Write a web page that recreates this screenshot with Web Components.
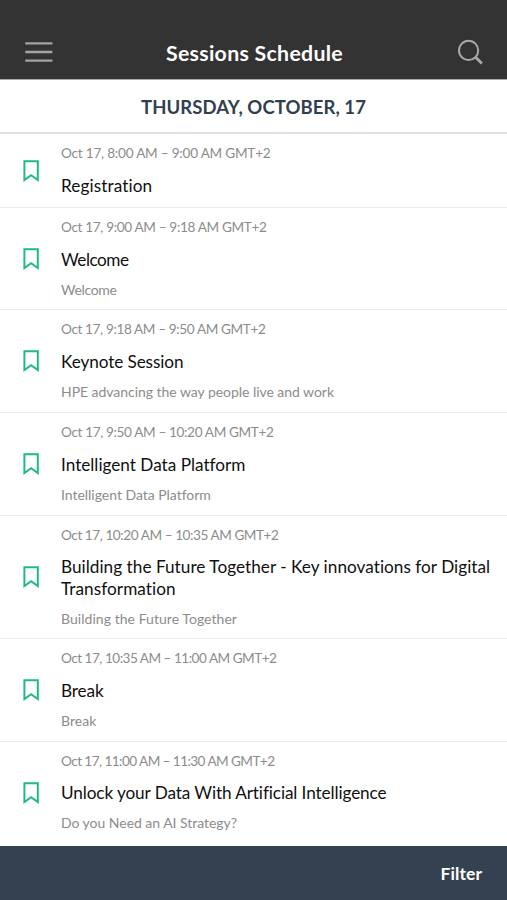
<!DOCTYPE html>
<html lang="en">
<head>
<meta charset="utf-8">
<title>Sessions Schedule</title>
<style>
body { margin: 0; background: #fff; font-family: Lato, "Open Sans", sans-serif; }
</style>
</head>
<body>
<schedule-app></schedule-app>
<script>
// One line of text whose tracking is set so that it spans a given width.
class FitText extends HTMLElement {
  connectedCallback() {
    if (this.shadowRoot) return;
    this.attachShadow({ mode: 'open' }).innerHTML =
      '<style>:host{display:block;white-space:nowrap}span{display:inline-block}</style><span><slot></slot></span>';
    const span = this.shadowRoot.querySelector('span');
    const target = Number(this.getAttribute('span'));
    const count = this.textContent.length;
    if (target) span.style.letterSpacing = (target - span.getBoundingClientRect().width) / count + 'px';
  }
}

class AppHeader extends HTMLElement {
  connectedCallback() {
    this.attachShadow({ mode: 'open' }).innerHTML = `
      <style>
        :host { display: grid; grid-template-columns: 28px 1fr 28px; align-items: center; box-sizing: border-box;
          height: 79px; padding: 24px 23px 0 25px; background: #333; color: #fff; font-size: 21.3px; font-weight: 700; line-height: 26px; }
        svg { display: block; }
        fit-text { justify-self: center; padding-top: 3px; }
      </style>
      <svg width="28" height="28" viewBox="0 0 28 28" stroke="#a3a3a3" stroke-width="2.4"><path d="M0.3 5.4H27.4M0.3 14H27.4M0.3 22.6H27.4"/></svg>
      <fit-text span="177">Sessions Schedule</fit-text>
      <svg width="28" height="28" viewBox="0 0 28 28" fill="none" stroke="#a8a8a8" stroke-width="2"><circle cx="12.6" cy="12.4" r="9.6"/><path d="M19.4 19.1L25.9 25.6" stroke-width="2.8"/></svg>`;
  }
}

class DayHeading extends HTMLElement {
  connectedCallback() {
    this.attachShadow({ mode: 'open' }).innerHTML = `
      <style>
        :host { display: flex; justify-content: center; box-sizing: border-box; height: 55px; padding-top: 15px;
          border-top: 1px solid #aaa; border-bottom: 2px solid #e0e0e0; color: #313f50; font-size: 18.5px; font-weight: 700; line-height: 24px; }
      </style>
      <slot></slot>`;
  }
}

class SessionRow extends HTMLElement {
  connectedCallback() {
    this.attachShadow({ mode: 'open' }).innerHTML = `
      <style>
        :host { display: grid; grid-template-columns: 61px 1fr; box-sizing: border-box; border-bottom: 1.5px solid #ebebeb; }
        .mark { align-self: center; display: block; margin-left: 23px; }
        .text { display: flex; flex-direction: column; padding-top: 11.3px; }
        ::slotted([slot=time]), ::slotted([slot=note]) { color: #8c8c8c; font-size: 14px; line-height: 17px; }
        ::slotted([slot=time]) { font-size: 13.6px; }
        ::slotted([slot=title]) { color: #101010; font-size: 17.2px; line-height: 21.5px; }
        .title { margin: 12.3px 0 10.6px; }
      </style>
      <svg class="mark" width="16" height="22" viewBox="0 0 16 22" fill="none" stroke="#1fb98b" stroke-width="2"><path d="M1.4 1.2H14.8V20L8.1 15.2L1.4 20Z"/></svg>
      <div class="text"><slot name="time"></slot><div class="title"><slot name="title"></slot></div><slot name="note"></slot></div>`;
  }
}

class FilterBar extends HTMLElement {
  connectedCallback() {
    this.attachShadow({ mode: 'open' }).innerHTML = `
      <style>
        :host { display: flex; justify-content: flex-end; align-items: center; box-sizing: border-box; height: 54px; padding: 2px 25px 0 0;
          background: #334150; color: #fff; font-size: 17.5px; font-weight: 700; line-height: 22px; }
      </style>
      <fit-text span="41.5">Filter</fit-text>`;
  }
}

const sessions = [
  [74, ['Oct 17, 8:00 AM – 9:00 AM GMT+2', 209.5], [['Registration', 91.5]], null],
  [102, ['Oct 17, 9:00 AM – 9:18 AM GMT+2', 205.5], [['Welcome', 67.5]], ['Welcome', 55.5]],
  [103, ['Oct 17, 9:18 AM – 9:50 AM GMT+2', 204.5], [['Keynote Session', 122.5]], ['HPE advancing the way people live and work', 273]],
  [102.5, ['Oct 17, 9:50 AM – 10:20 AM GMT+2', 212.5], [['Intelligent Data Platform', 184]], ['Intelligent Data Platform', 149.5]],
  [123.5, ['Oct 17, 10:20 AM – 10:35 AM GMT+2', 217.5], [['Building the Future Together - Key innovations for Digital', 429.5], ['Transformation', 115]], ['Building the Future Together', 176]],
  [102.5, ['Oct 17, 10:35 AM – 11:00 AM GMT+2', 215.5], [['Break', 42.5]], ['Break', 35.5]],
  [104.5, ['Oct 17, 11:00 AM – 11:30 AM GMT+2', 213.5], [['Unlock your Data With Artificial Intelligence', 325.5]], ['Do you Need an AI Strategy?', 176]]
];

class ScheduleApp extends HTMLElement {
  connectedCallback() {
    const line = (slot, [text, span]) => `<fit-text slot="${slot}" span="${span}">${text}</fit-text>`;
    this.attachShadow({ mode: 'open' }).innerHTML = `
      <style>
        :host { display: flex; flex-direction: column; height: 900px; overflow: hidden; background: #fff; }
        main { flex: 1; min-height: 0; }
        session-row:last-child { border-bottom-color: #fff; }
      </style>
      <app-header></app-header>
      <day-heading><fit-text span="225">THURSDAY, OCTOBER, 17</fit-text></day-heading>
      <main>${sessions.map(([h, time, titles, note]) =>
        `<session-row style="height:${h}px">${line('time', time)}${titles.map(t => line('title', t)).join('')}${note ? line('note', note) : ''}</session-row>`).join('')}</main>
      <filter-bar></filter-bar>`;
  }
}

customElements.define('app-header', AppHeader);
customElements.define('day-heading', DayHeading);
customElements.define('session-row', SessionRow);
customElements.define('filter-bar', FilterBar);
customElements.define('schedule-app', ScheduleApp);
customElements.define('fit-text', FitText);
</script>
</body>
</html>
